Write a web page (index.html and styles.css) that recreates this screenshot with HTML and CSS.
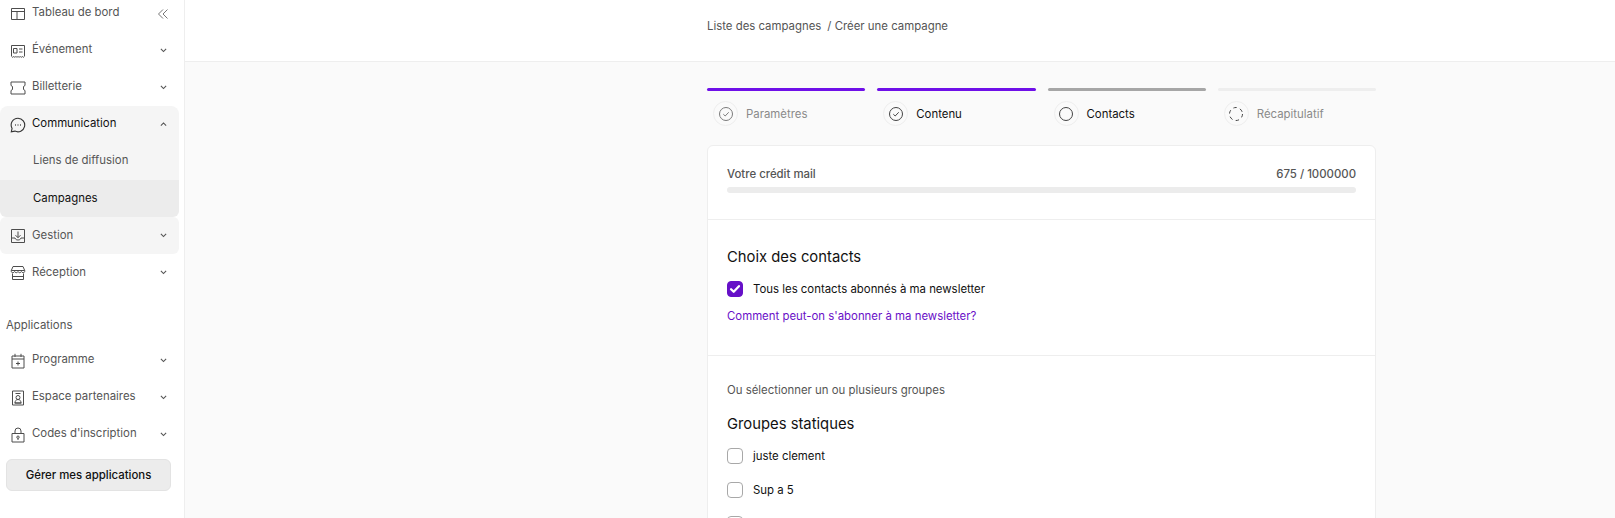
FILE: index.html
```html
<!DOCTYPE html>
<html lang="fr">
<head>
<meta charset="utf-8">
<title>Créer une campagne</title>
<link rel="stylesheet" href="styles.css">
</head>
<body>
<div class="app">
  <aside class="sidebar">
    <nav class="nav">
      <div class="item">
        <svg class="ico" viewBox="0 0 16 16"><path d="M1.500 2.500h13v11h-13zM1.500 5.500h13M7 5.500v8"/></svg>
        <span class="txt">Tableau de bord</span>
        <svg class="collapse" viewBox="0 0 12 12"><path d="M6 1.500 1.500 6 6 10.500M10.500 1.500 6 6l4.500 4.500"/></svg>
      </div>
      <div class="item">
        <svg class="ico" viewBox="0 0 16 16"><path d="M1.500 13V2.500h13V13M1.500 13.500c1 1 1.600 1 2.200 0 .7 1 1.500 1 2.200 0 .7 1 1.500 1 2.100 0 .7 1 1.500 1 2.200 0 .7 1 1.500 1 2.200 0 .6 1 1.200 1 2.100 0M3.500 5.500h3.500v4.500H3.500zM9 6h3.500M9 9h3.500"/></svg>
        <span class="txt">Événement</span>
        <svg class="chev" viewBox="0 0 8 5"><path d="M1 1l3 3 3-3"/></svg>
      </div>
      <div class="item">
        <svg class="ico" viewBox="0 0 16 16"><path d="M1 2h14v3.500l-1.500 1v3l1.500 1V14H1v-3.500l1.500-1v-3L1 5.500z"/></svg>
        <span class="txt">Billetterie</span>
        <svg class="chev" viewBox="0 0 8 5"><path d="M1 1l3 3 3-3"/></svg>
      </div>
      <div class="group">
        <div class="item active">
          <svg class="ico strong" viewBox="0 0 16 16"><path d="M8 1.200a6.800 6.800 0 1 1-3.100 12.900L1.300 14.800l.8-3.400A6.800 6.800 0 0 1 8 1.200z"/><path class="dots" d="M5 8h.8M7.600 8h.8M10.200 8h.8"/></svg>
          <span class="txt">Communication</span>
          <svg class="chev" viewBox="0 0 8 5"><path d="M1 4l3-3 3 3"/></svg>
        </div>
        <div class="sub">Liens de diffusion</div>
      </div>
      <div class="sub current">Campagnes</div>
      <div class="item hover">
        <svg class="ico" viewBox="0 0 16 16"><path d="M1.500 1.500h13v13h-13zM1.500 10h3.500c.5 1.500 1.500 2 3 2s2.500-.5 3-2h3.500M8 3.500v6M5.500 7.200 8 9.700l2.500-2.500"/></svg>
        <span class="txt">Gestion</span>
        <svg class="chev" viewBox="0 0 8 5"><path d="M1 1l3 3 3-3"/></svg>
      </div>
      <div class="item">
        <svg class="ico" viewBox="0 0 16 16"><path d="M3 1.500h10l1.700 4v1c-.2 1.600-2.600 1.600-3.300 0-.6 1.600-2.800 1.600-3.400 0-.6 1.600-2.800 1.600-3.400 0-.7 1.600-3.100 1.600-3.300 0v-1zM1.300 5.500h13.400M2.500 8.500v6h11v-6M2.500 11.500h11"/></svg>
        <span class="txt">Réception</span>
        <svg class="chev" viewBox="0 0 8 5"><path d="M1 1l3 3 3-3"/></svg>
      </div>
      <div class="section-label">Applications</div>
      <div class="item">
        <svg class="ico" viewBox="0 0 16 16"><path d="M2 3h12v12H2zM2 6h12M5 .8V4M11 .8V4M8 8.500v4M6 10.500h4"/></svg>
        <span class="txt">Programme</span>
        <svg class="chev" viewBox="0 0 8 5"><path d="M1 1l3 3 3-3"/></svg>
      </div>
      <div class="item">
        <svg class="ico" viewBox="0 0 16 16"><path d="M2.500 1h11v14h-11zM5.500 3.500h5M8 5.500a2 2 0 1 1 0 4 2 2 0 0 1 0-4zM5 13c0-2 1-3.500 3-3.500s3 1.500 3 3.500zM4.500 13h7"/></svg>
        <span class="txt">Espace partenaires</span>
        <svg class="chev" viewBox="0 0 8 5"><path d="M1 1l3 3 3-3"/></svg>
      </div>
      <div class="item">
        <svg class="ico" viewBox="0 0 16 16"><path d="M2 6.500h12v8.500H2zM5 6.500V4a3 3 0 0 1 6 0v2.500M8 9a1.200 1.200 0 1 1 0 2.400A1.200 1.200 0 0 1 8 9zM8 11.400V13"/></svg>
        <span class="txt">Codes d'inscription</span>
        <svg class="chev" viewBox="0 0 8 5"><path d="M1 1l3 3 3-3"/></svg>
      </div>
      <button class="manage">Gérer mes applications</button>
    </nav>
  </aside>
  <main class="main">
    <header class="topbar"><span>Liste des campagnes</span><span class="sep">/ Créer une campagne</span></header>
    <div class="content">
      <div class="steps">
        <div class="step done muted">
          <div class="bar"></div>
          <div class="step-body">
            <span class="circle"><svg viewBox="0 0 16 16"><circle cx="8" cy="8" r="6.500"/><path d="M5.300 8.200 7.200 10l3.500-3.700"/></svg></span>
            <span>Paramètres</span>
          </div>
        </div>
        <div class="step done">
          <div class="bar"></div>
          <div class="step-body">
            <span class="circle dark"><svg viewBox="0 0 16 16"><circle cx="8" cy="8" r="6.500"/><path d="M5.300 8.200 7.200 10l3.500-3.700"/></svg></span>
            <span>Contenu</span>
          </div>
        </div>
        <div class="step current-step">
          <div class="bar"></div>
          <div class="step-body">
            <span class="circle dark"><svg viewBox="0 0 16 16"><circle cx="8" cy="8" r="6.500"/></svg></span>
            <span>Contacts</span>
          </div>
        </div>
        <div class="step todo muted">
          <div class="bar"></div>
          <div class="step-body">
            <span class="circle dark"><svg viewBox="0 0 16 16"><circle cx="8" cy="8" r="6.500" stroke-dasharray="3.500 3.300"/></svg></span>
            <span>Récapitulatif</span>
          </div>
        </div>
      </div>
      <section class="card">
        <div class="block credit">
          <div class="credit-row"><span>Votre crédit mail</span><span>675 / 1000000</span></div>
          <div class="progress"></div>
        </div>
        <div class="block choice">
          <h2>Choix des contacts</h2>
          <label class="check"><span class="box on"><svg viewBox="0 0 16 16"><path d="M3.500 8.300l3 2.900 6-6.400"/></svg></span><span>Tous les contacts abonnés à ma newsletter</span></label>
          <a class="link">Comment peut-on s'abonner à ma newsletter?</a>
        </div>
        <div class="block groups">
          <p class="hint">Ou sélectionner un ou plusieurs groupes</p>
          <h2>Groupes statiques</h2>
          <label class="check"><span class="box"></span><span>juste clement</span></label>
          <label class="check"><span class="box"></span><span>Sup a 5</span></label>
          <label class="check"><span class="box"></span></label>
        </div>
      </section>
    </div>
  </main>
</div>
</body>
</html>
```
FILE: styles.css
```css
* { box-sizing: border-box; }
html, body { margin: 0; height: 518px; overflow: hidden; }
body { font-family: Inter, "Liberation Sans", sans-serif; font-size: 11.4px; color: #555; background: #fff; }
.app { display: grid; grid-template-columns: 185px 1fr; height: 518px; overflow: hidden; }

.sidebar { background: #fff; border-right: 1px solid #eee; overflow: hidden; }
.nav { margin-top: -5px; width: 179px; display: flex; flex-direction: column; }
.item { height: 37px; display: flex; align-items: center; padding: 0 12px 0 10px; color: #555; }
.item .txt { flex: 1; margin-left: 6px; margin-bottom: 4px; }
.item.hover .txt, .item.hover + .item .txt { margin-bottom: 2px; }
.ico { width: 16px; height: 16px; flex: none; fill: none; stroke: #4d4d4d; stroke-width: 1; }
.ico.strong { stroke: #333; stroke-width: 1.100; }
.ico .dots { stroke-width: 1.400; }
.chev { width: 7px; height: 4.500px; flex: none; fill: none; stroke: #555; stroke-width: 1.300; }
.collapse { width: 12px; height: 12px; flex: none; margin-right: -2px; fill: none; stroke: #777; stroke-width: 1; }
.group { background: #f5f5f5; border-radius: 8px 8px 0 0; }
.item.active { color: #111; }
.sub { height: 37px; display: flex; align-items: center; padding: 0 0 3px 33px; color: #555; }
.sub.current { background: #ececec; color: #111; border-radius: 0 0 6px 6px; padding-bottom: 1px; }
.item.hover { background: #f5f5f5; border-radius: 6px; }
.section-label { margin: 24px 0 7px 6px; height: 20px; line-height: 20px; color: #555; }
.manage { margin: 6px 0 0 6px; width: 165px; height: 32px; border: 1px solid #e3e3e3; border-radius: 6px; background: #ececec; font: 500 11.400px Inter, "Liberation Sans", sans-serif; color: #111; padding: 0; }

.main { background: #fafafa; min-width: 0; }
.topbar { height: 62px; background: #fff; border-bottom: 1px solid #eee; padding: 16px 0 0 522px; line-height: 20px; color: #555; }
.sep { margin-left: 6px; }
.content { margin-left: 522px; width: 669px; padding-top: 26px; }
.steps { display: grid; grid-template-columns: repeat(4, 1fr); column-gap: 12px; }
.bar { height: 3px; border-radius: 2px; background: #6f10e8; }
.current-step .bar { background: #a6a6a6; }
.todo .bar { background: #eee; }
.step-body { display: flex; align-items: center; gap: 8px; margin-top: 10px; padding-left: 6px; height: 25px; color: #111; }
.muted .step-body { color: #8a8a8a; }
.circle { width: 25px; height: 25px; border: 1px solid #eee; border-radius: 50%; display: flex; align-items: center; justify-content: center; background: #fafafa; }
.circle svg { width: 16px; height: 16px; fill: none; stroke: #7a7a7a; stroke-width: 1; }
.circle.dark svg { stroke: #444; }

.card { margin-top: 19px; background: #fff; border: 1px solid #eee; border-radius: 6px 6px 0 0; }
.block { padding: 0 19px; border-bottom: 1px solid #eee; }
.credit { padding-top: 20px; padding-bottom: 26px; }
.credit-row { display: flex; justify-content: space-between; line-height: 16px; font-weight: 500; color: #555; }
.progress { margin-top: 5px; height: 6px; border-radius: 3px; background: #ececec; }
.choice { padding-top: 27px; padding-bottom: 29px; }
h2 { margin: 0; font-size: 14.800px; line-height: 20px; font-weight: 400; color: #111; }
.check { display: flex; align-items: center; gap: 10px; height: 16px; margin-top: 14px; color: #111; }
.check + .check { margin-top: 18px; }
.box { width: 16px; height: 16px; flex: none; border: 1px solid #a8a8a8; border-radius: 4px; background: #fff; }
.box.on { background: #6610c8; border-color: #6610c8; }
.box svg { display: block; width: 14px; height: 14px; fill: none; stroke: #fff; stroke-width: 2.600; stroke-linecap: round; stroke-linejoin: round; }
.link { display: block; margin-top: 9px; line-height: 20px; color: #6a10c8; }
.groups { padding-top: 24px; border-bottom: 0; height: 200px; }
.hint { margin: 0 0 14px; line-height: 20px; color: #555; }
```
